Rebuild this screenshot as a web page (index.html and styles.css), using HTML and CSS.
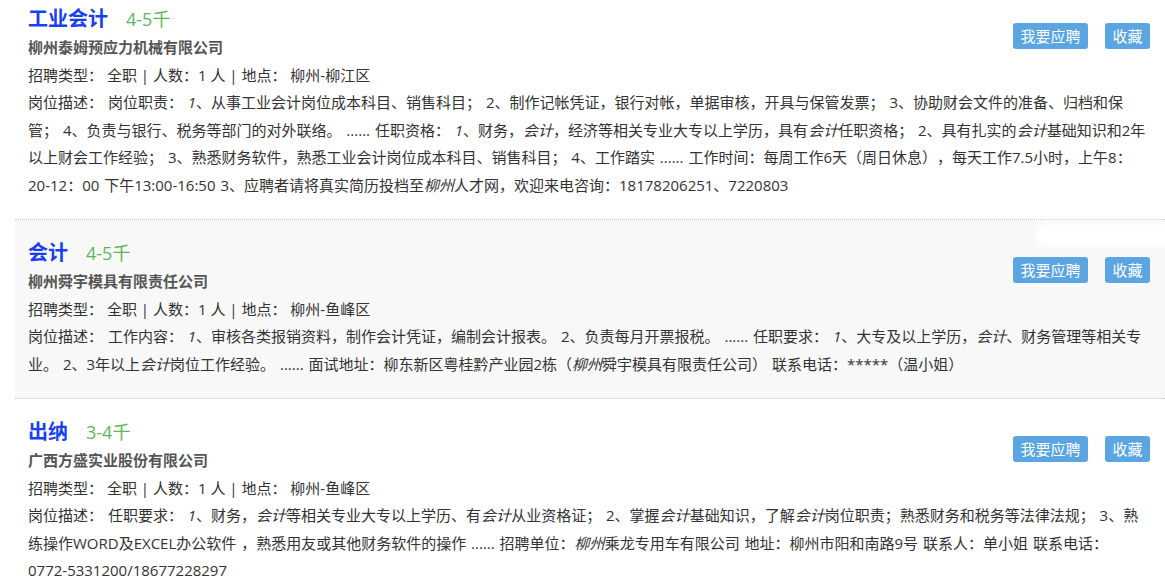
FILE: index.html
```html
<!DOCTYPE html>
<html lang="zh-CN">
<head>
<meta charset="utf-8">
<title>职位列表</title>
<link rel="stylesheet" href="styles.css">
</head>
<body>
<div class="list">
  <div class="job">
    <div class="job-head">
      <div class="job-main">
        <div class="job-title"><a class="name">工业会计</a><span class="salary">4-5千</span></div>
        <div class="company">柳州泰姆预应力机械有限公司</div>
      </div>
      <div class="actions"><a class="btn">我要应聘</a><a class="btn">收藏</a></div>
    </div>
    <div class="meta">招聘类型： 全职 | 人数：1 人 | 地点： 柳州-柳江区</div>
    <div class="desc">岗位描述： 岗位职责： <em>1</em>、从事工业会计岗位成本科目、销售科目； 2、制作记帐凭证，银行对帐，单据审核，开具与保管发票； 3、协助财会文件的准备、归档和保管； 4、负责与银行、税务等部门的对外联络。 ...... 任职资格： <em>1</em>、财务，<em>会计</em>，经济等相关专业大专以上学历，具有<em>会计</em>任职资格； 2、具有扎实的<em>会计</em>基础知识和2年以上财会工作经验； 3、熟悉财务软件，熟悉工业会计岗位成本科目、销售科目； 4、工作踏实 ...... 工作时间：每周工作6天（周日休息），每天工作7.5小时，上午8：<span class="nowrap">20-12：00</span> 下午13:00-16:50 3、应聘者请将真实简历投档至<em>柳州</em>人才网，欢迎来电咨询：18178206251、7220803</div>
  </div>
  <div class="job job-active">
    <span class="glare"></span>
    <div class="job-head">
      <div class="job-main">
        <div class="job-title"><a class="name">会计</a><span class="salary">4-5千</span></div>
        <div class="company">柳州舜宇模具有限责任公司</div>
      </div>
      <div class="actions"><a class="btn">我要应聘</a><a class="btn">收藏</a></div>
    </div>
    <div class="meta">招聘类型： 全职 | 人数：1 人 | 地点： 柳州-鱼峰区</div>
    <div class="desc">岗位描述： 工作内容： <em>1</em>、审核各类报销资料，制作会计凭证，编制会计报表。 2、负责每月开票报税。 ...... 任职要求： <em>1</em>、大专及以上学历，<em>会计</em>、财务管理等相关专业。 2、3年以上<em>会计</em>岗位工作经验。 ...... 面试地址：柳东新区粤桂黔产业园2栋（<em>柳州</em>舜宇模具有限责任公司） 联系电话：*****（温小姐）</div>
  </div>
  <div class="job">
    <div class="job-head">
      <div class="job-main">
        <div class="job-title"><a class="name">出纳</a><span class="salary">3-4千</span></div>
        <div class="company">广西方盛实业股份有限公司</div>
      </div>
      <div class="actions"><a class="btn">我要应聘</a><a class="btn">收藏</a></div>
    </div>
    <div class="meta">招聘类型： 全职 | 人数：1 人 | 地点： 柳州-鱼峰区</div>
    <div class="desc">岗位描述： 任职要求： <em>1</em>、财务，<em>会计</em>等相关专业大专以上学历、有<em>会计</em>从业资格证； 2、掌握<em>会计</em>基础知识，了解<em>会计</em>岗位职责；熟悉财务和税务等法律法规； 3、熟练操作WORD及EXCEL办公软件 ，熟悉用友或其他财务软件的操作 ...... 招聘单位：<em>柳州</em>乘龙专用车有限公司 地址：柳州市阳和南路9号 联系人：单小姐 联系电话：<span class="nowrap">0772-5331200/18677228297</span></div>
  </div>
</div>
</body>
</html>
```

FILE: styles.css
```css
html, body {
  margin: 0;
  padding: 0;
  background: #fff;
}
body {
  font-family: "Open Sans", "Noto Sans CJK SC", sans-serif;
  font-size: 15px;
  color: #333;
  overflow: hidden;
  text-spacing-trim: space-all;
}
.list {
  margin: -14px 0 0 15px;
}
.job {
  position: relative;
  padding: 19px 15px 20px 13px;
  border-bottom: 1px dotted #c8c8c8;
}
.job-active {
  background: #f8f8f8;
}
.job-head {
  display: flex;
  justify-content: space-between;
  align-items: flex-start;
}
.job-title {
  height: 28px;
  line-height: 28px;
  white-space: nowrap;
}
.name {
  font-size: 20px;
  font-weight: bold;
  color: #1a3ef5;
}
.salary {
  font-size: 18px;
  color: #5bb85d;
  margin-left: 18px;
}
.company {
  font-weight: bold;
  color: #555;
  line-height: 28px;
}
.actions {
  display: flex;
  gap: 17px;
  padding-top: 18px;
}
.btn {
  display: block;
  background: #5aa5e2;
  color: #fff;
  font-size: 15px;
  line-height: 26px;
  padding: 0 7.5px;
  border-radius: 3px;
}
.meta {
  line-height: 28px;
}
.desc {
  line-height: 27.5px;
  word-spacing: 1px;
}
.desc em {
  font-style: italic;
  padding-left: 0;
}
.nowrap {
  white-space: nowrap;
}
.glare {
  position: absolute;
  top: 3px;
  right: -30px;
  width: 160px;
  height: 24px;
  border-radius: 12px;
  background: #fff;
  filter: blur(3px);
}
```
